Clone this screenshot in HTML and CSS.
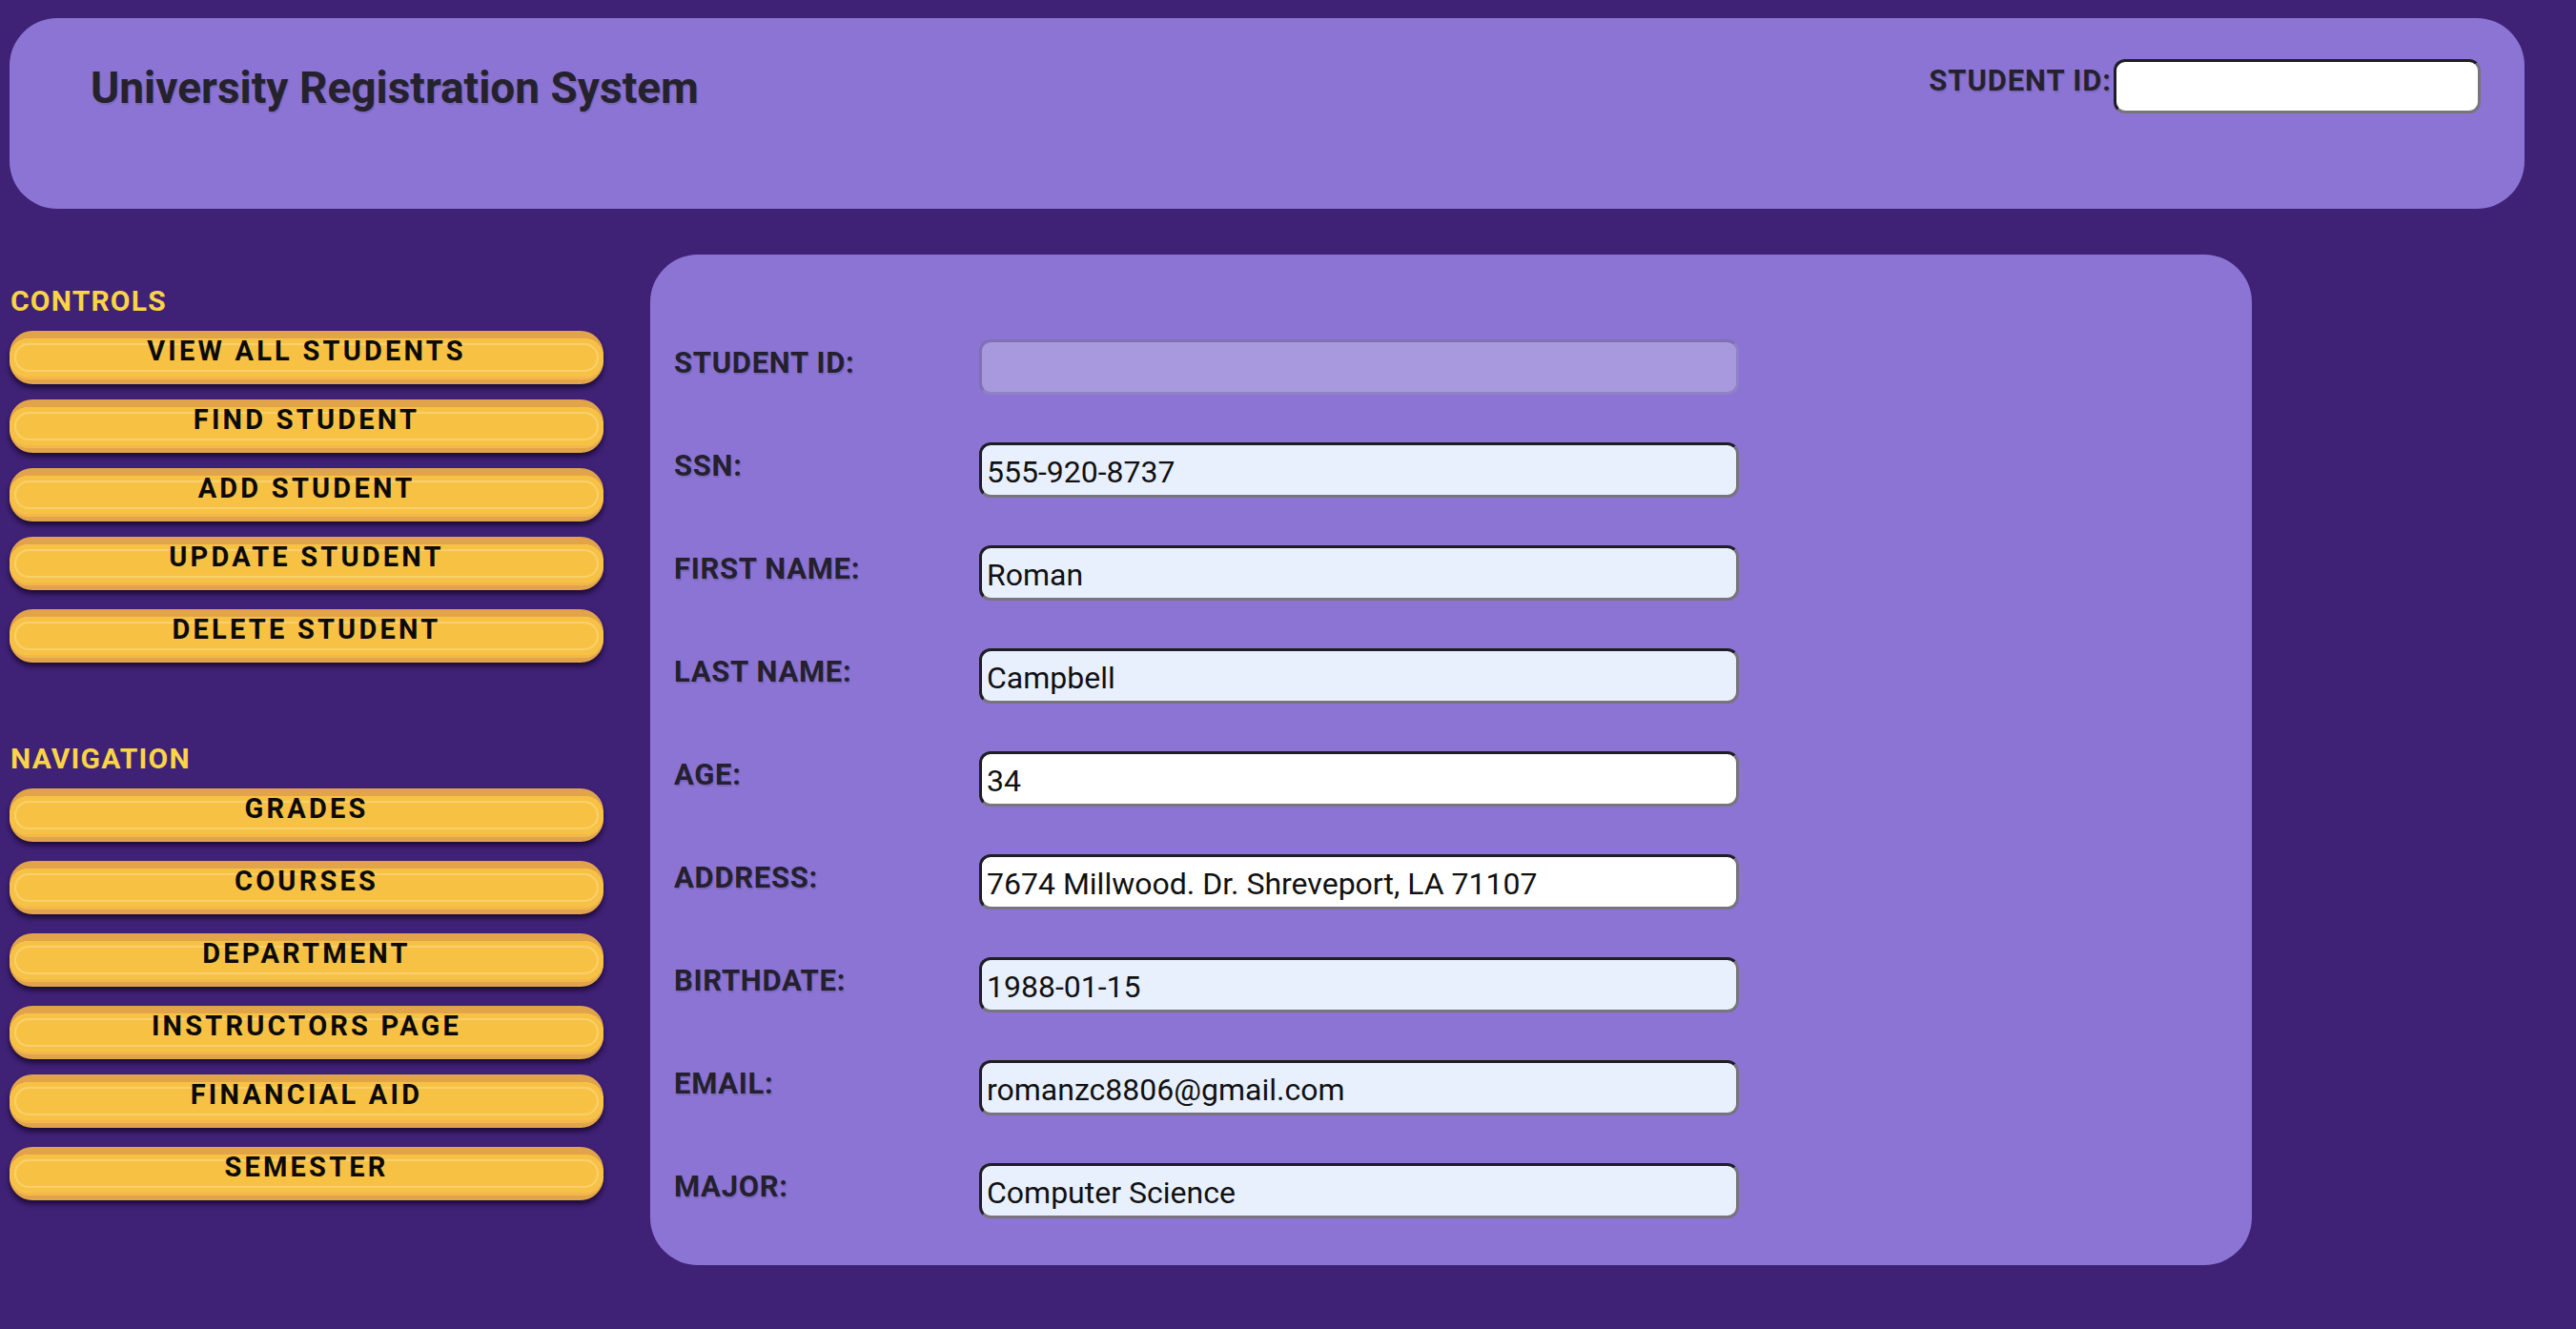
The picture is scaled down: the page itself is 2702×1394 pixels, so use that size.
FILE: index.html
```html
<!DOCTYPE html>
<html lang="en">
<head>
<meta charset="utf-8">
<title>University Registration System</title>
<link rel="stylesheet" href="styles.css">
</head>
<body>
<header class="topbar">
  <h1 class="title">University Registration System</h1>
  <div class="search">
    <label class="search-label" for="sid">STUDENT ID:</label>
    <input class="search-input" id="sid" type="text">
  </div>
</header>

<div class="main">
  <aside class="sidebar">
    <h2 class="side-heading">CONTROLS</h2>
    <div class="btn-list btn-list-controls">
      <button class="btn"><span class="face">VIEW ALL STUDENTS</span></button>
      <button class="btn"><span class="face">FIND STUDENT</span></button>
      <button class="btn"><span class="face">ADD STUDENT</span></button>
      <button class="btn"><span class="face">UPDATE STUDENT</span></button>
      <button class="btn btn-spaced"><span class="face">DELETE STUDENT</span></button>
    </div>

    <h2 class="side-heading side-heading-nav">NAVIGATION</h2>
    <div class="btn-list btn-list-nav">
      <button class="btn"><span class="face">GRADES</span></button>
      <button class="btn"><span class="face">COURSES</span></button>
      <button class="btn"><span class="face">DEPARTMENT</span></button>
      <button class="btn"><span class="face">INSTRUCTORS PAGE</span></button>
      <button class="btn btn-tight"><span class="face">FINANCIAL AID</span></button>
      <button class="btn"><span class="face">SEMESTER</span></button>
    </div>
  </aside>

  <section class="panel">
    <div class="row"><label class="field-label">STUDENT ID:</label><input class="field field-disabled" type="text" disabled></div>
    <div class="row"><label class="field-label">SSN:</label><input class="field field-auto" type="text" value="555-920-8737"></div>
    <div class="row"><label class="field-label">FIRST NAME:</label><input class="field field-auto" type="text" value="Roman"></div>
    <div class="row"><label class="field-label">LAST NAME:</label><input class="field field-auto" type="text" value="Campbell"></div>
    <div class="row"><label class="field-label">AGE:</label><input class="field" type="text" value="34"></div>
    <div class="row"><label class="field-label">ADDRESS:</label><input class="field" type="text" value="7674 Millwood. Dr. Shreveport, LA 71107"></div>
    <div class="row"><label class="field-label">BIRTHDATE:</label><input class="field field-auto" type="text" value="1988-01-15"></div>
    <div class="row"><label class="field-label">EMAIL:</label><input class="field field-auto" type="text" value="romanzc8806@gmail.com"></div>
    <div class="row"><label class="field-label">MAJOR:</label><input class="field field-auto" type="text" value="Computer Science"></div>
  </section>
</div>
</body>
</html>
```

FILE: styles.css
```css
* {
  box-sizing: border-box;
}

html, body {
  margin: 0;
  background: #3f2176;
}

body {
  padding: 19px 54px 40px 10px;
  font-family: Roboto, "Liberation Sans", sans-serif;
  color: #24202e;
}

/* ---------- header ---------- */
.topbar {
  height: 200px;
  background: #8b74d4;
  border-radius: 50px;
  display: flex;
  justify-content: space-between;
  align-items: flex-start;
  padding: 43px 46px 0 85px;
}

.title {
  margin: 3px 0 0;
  font-size: 46px;
  line-height: 1.2;
  font-weight: 700;
  color: #25222e;
  text-shadow: 1px 2px 1px rgba(0, 0, 0, 0.12);
}

.search {
  display: flex;
  align-items: flex-start;
}

.search-label {
  margin-top: 4px;
  font-size: 31px;
  line-height: 1.2;
  font-weight: 700;
  letter-spacing: 0.9px;
  color: #25222e;
  text-shadow: 1px 2px 1px rgba(0, 0, 0, 0.12);
}

.search-input {
  width: 385px;
  height: 57px;
  margin-left: 2px;
  background: #ffffff;
  border: 3px solid;
  border-color: #1f1e24 #77747c #77747c #1f1e24;
  border-radius: 12px;
  font-family: Roboto, "Liberation Sans", sans-serif;
  font-size: 32px;
  padding: 0 6px;
}

/* ---------- main ---------- */
.main {
  display: flex;
  align-items: flex-start;
  gap: 49px;
  margin-top: 48px;
}

.sidebar {
  width: 623px;
  flex: none;
}

.side-heading {
  margin: 31px 0 13px 1px;
  font-size: 30px;
  line-height: 1.2;
  font-weight: 700;
  letter-spacing: 1.2px;
  color: #f9d447;
}

.side-heading-nav {
  margin-top: 83px;
}

.btn-list {
  display: flex;
  flex-direction: column;
}

.btn-list-controls {
  gap: 16px;
}

.btn-list-nav {
  gap: 20px;
}

.btn-spaced {
  margin-top: 4px;
}

.btn-tight {
  margin-top: -4px;
}

.btn {
  display: block;
  width: 100%;
  height: 56px;
  padding: 0;
  border: none;
  border-radius: 24px;
  background: #e2a44b;
  box-shadow: 0 4px 5px rgba(18, 6, 36, 0.75);
  cursor: pointer;
}

.face {
  display: block;
  height: 40px;
  border-radius: 22px;
  background: #f7c244;
  box-shadow: inset 0 0 0 5px #f7c244, inset 0 0 0 7px #f9d06e, 0 3px 0 #f2b84c;
  font-family: Roboto, "Liberation Sans", sans-serif;
  font-size: 29px;
  line-height: 27px;
  padding-top: 0;
  font-weight: 700;
  letter-spacing: 3.2px;
  color: #0c0a08;
  text-align: center;
}

/* ---------- form panel ---------- */
.panel {
  width: 1680px;
  flex: none;
  background: #8b74d4;
  border-radius: 50px;
  padding: 89px 25px 49px;
  display: flex;
  flex-direction: column;
  gap: 50px;
}

.row {
  display: flex;
  align-items: flex-start;
}

.field-label {
  width: 320px;
  flex: none;
  padding-top: 6px;
  font-size: 31px;
  line-height: 1.2;
  font-weight: 700;
  letter-spacing: 0.7px;
  color: #24202e;
  text-shadow: 1px 2px 1px rgba(0, 0, 0, 0.12);
}

.field {
  width: 797px;
  height: 58px;
  background: #ffffff;
  border: 3px solid;
  border-color: #1f1e24 #77747c #77747c #1f1e24;
  border-radius: 12px;
  padding: 4px 5px 0;
  font-family: Roboto, "Liberation Sans", sans-serif;
  font-size: 32px;
  color: #111111;
}

.field-auto {
  background: #e8f0fe;
}

.field-disabled {
  background: #a898dd;
  border-color: #7f71b4 #8f82c6 #8f82c6 #7f71b4;
}
```
